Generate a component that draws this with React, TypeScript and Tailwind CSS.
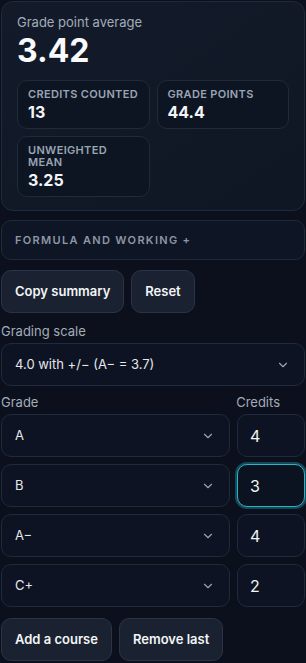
import React from 'react';
import { ChevronDown } from 'lucide-react';

const Stat: React.FC<{ label: string; value: string }> = ({ label, value }) => (
  <div className="rounded-[10px] border border-[#1f2a3a] bg-[#0d1422] px-[10px] pt-[7px] pb-[6px]">
    <p className="text-[11px] font-semibold uppercase leading-[12px] tracking-[0.03em] text-[#9aa5b4]">{label}</p>
    <p className="mt-[3px] text-[16px] font-bold leading-[19px] text-[#f3f4f6]">{value}</p>
  </div>
);

const Btn: React.FC<{ children: React.ReactNode }> = ({ children }) => (
  <button className="h-[43px] rounded-[10px] border border-[#2a3444] bg-[#1a2231] px-[13px] text-[13px] font-semibold text-[#f3f4f6]">
    {children}
  </button>
);

const Select: React.FC<{ value: string; className?: string }> = ({ value, className }) => (
  <div className={`flex h-[43px] items-center justify-between rounded-[10px] border border-[#1f2a3a] bg-[#0d1322] pl-[13px] pr-[14px] text-[13px] text-[#e5e7eb] ${className ?? ''}`}>
    <span>{value}</span>
    <ChevronDown size={14} strokeWidth={2} className="text-[#9ca3af]" />
  </div>
);

const Credit: React.FC<{ value: string; focused?: boolean }> = ({ value, focused }) => (
  <div
    className={`flex h-[43px] w-[68px] items-center rounded-[10px] border pl-[12px] text-[16px] text-[#f3f4f6] ${
      focused ? 'border-[#2fb3c4] bg-[#0b1220] shadow-[0_0_0_2px_rgba(34,180,200,0.35)]' : 'border-[#1f2a3a] bg-[#0d1322]'
    }`}
  >
    {value}
  </div>
);

const rows = [
  { grade: 'A', credits: '4' },
  { grade: 'B', credits: '3', focused: true },
  { grade: 'A−', credits: '4' },
  { grade: 'C+', credits: '2' },
];

export default function App() {
  return (
    <div className="min-h-[663px] w-[306px] bg-[#0b101c] px-px pt-px font-['Inter',sans-serif]">
      <div className="rounded-[12px] border border-[#1f2a3a] bg-gradient-to-br from-[#131b2a] to-[#0f1624] px-[15px] pt-[12px] pb-[13px]">
        <p className="text-[13px] leading-[16px] text-[#a3acb9]">Grade point average</p>
        <p className="mt-[2px] text-[32px] font-bold leading-[38px] text-[#f9fafb]">3.42</p>
        <div className="mt-[10px] grid grid-cols-2 gap-[7px]">
          <Stat label="Credits counted" value="13" />
          <Stat label="Grade points" value="44.4" />
          <Stat label="Unweighted mean" value="3.25" />
        </div>
      </div>

      <div className="mt-[9px] flex h-[40px] items-center rounded-[10px] border border-[#1f2a3a] bg-[#0e1524] pl-[13px] text-[11px] font-semibold uppercase tracking-[0.12em] text-[#8d97a6]">
        Formula and working +
      </div>

      <div className="mt-[10px] flex gap-[7px]">
        <Btn>Copy summary</Btn>
        <Btn>Reset</Btn>
      </div>

      <p className="mt-[10px] text-[13px] leading-[16px] text-[#a3acb9]">Grading scale</p>
      <Select value="4.0 with +/− (A− = 3.7)" className="mt-[4px] h-[42px]" />

      <div className="mt-[8px] flex justify-between pr-[25px] text-[13px] leading-[16px] text-[#a3acb9]">
        <span>Grade</span>
        <span>Credits</span>
      </div>
      <div className="mt-[4px] flex flex-col gap-[7px]">
        {rows.map((r, i) => (
          <div key={i} className="flex gap-[7px]">
            <Select value={r.grade} className="flex-1" />
            <Credit value={r.credits} focused={r.focused} />
          </div>
        ))}
      </div>

      <div className="mt-[11px] flex gap-[7px]">
        <Btn>Add a course</Btn>
        <Btn>Remove last</Btn>
      </div>
    </div>
  );
}
